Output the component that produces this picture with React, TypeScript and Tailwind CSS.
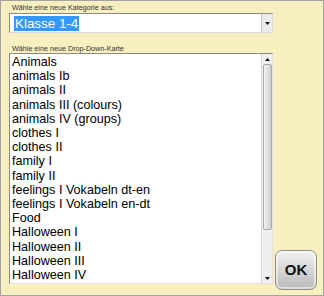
const items = [
  "Animals",
  "animals Ib",
  "animals II",
  "animals III (colours)",
  "animals IV (groups)",
  "clothes I",
  "clothes II",
  "family I",
  "family II",
  "feelings I Vokabeln dt-en",
  "feelings I Vokabeln en-dt",
  "Food",
  "Halloween I",
  "Halloween II",
  "Halloween III",
  "Halloween IV",
];

const font = { fontFamily: '"Liberation Sans", Arial, sans-serif' };

const DownArrow = () => (
  <svg width="5" height="3" viewBox="0 0 5 3">
    <polygon points="0,0 5,0 2.5,3" fill="#111" />
  </svg>
);

const UpArrow = () => (
  <svg width="5" height="3" viewBox="0 0 5 3">
    <polygon points="0,3 5,3 2.5,0" fill="#111" />
  </svg>
);

export default function App() {
  return (
    <div
      style={font}
      className="w-[324px] h-[296px] border border-[#a3a3a3] bg-[#f7efc0] pl-2 pt-[1px] flex flex-col"
    >
      {/* CATEGORY */}
      <div className="text-[7.2px] leading-[11px] text-[#333] ml-[3px] h-[11px]">
        Wähle eine neue Kategorie aus:
      </div>
      <div className="w-[264px] h-[20px] flex bg-white border border-t-[#8a8a8a] border-l-[#8a8a8a] border-r-[#dcdcdc] border-b-[#dcdcdc]">
        <div className="flex-1 flex items-center pl-[4px]">
          <span className="bg-[#3399ff] text-white text-[13.4px] leading-[15px] px-[1px]">Klasse 1-4</span>
        </div>
        <div className="w-[11px] flex items-center justify-center bg-[#ececec] border-l border-[#c8c8c8]">
          <DownArrow />
        </div>
      </div>

      {/* CARD LIST */}
      <div className="text-[7.2px] leading-[9px] text-[#333] ml-[3px] mt-[11px] h-[9px]">
        Wähle eine neue Drop-Down-Karte
      </div>
      <div className="flex items-end">
        <div className="w-[264px] h-[231px] flex bg-white border border-t-[#8a8a8a] border-l-[#8a8a8a] border-r-[#e2e2e2] border-b-[#e2e2e2]">
          <div className="flex-1 pl-[2px] pt-[1px] overflow-hidden">
            {items.map((item) => (
              <div key={item} className="text-[12.6px] leading-[14.2px] text-black whitespace-nowrap">
                {item}
              </div>
            ))}
          </div>
          {/* SCROLLBAR */}
          <div className="w-[11px] flex flex-col bg-[#efefef] border-l border-[#d8d8d8]">
            <div className="h-[10px] flex items-center justify-center">
              <UpArrow />
            </div>
            <div className="h-[166px] mx-[0.5px] rounded-[2px] border border-[#a9a9a9] bg-gradient-to-r from-[#f4f4f4] to-[#cfcfcf]" />
            <div className="flex-1" />
            <div className="h-[10px] flex items-center justify-center">
              <DownArrow />
            </div>
          </div>
        </div>
        <button className="ml-[2px] mb-[-6px] w-[42px] h-[40px] rounded-[7px] border border-[#8c8c8c] bg-gradient-to-b from-[#f2f2f2] to-[#b9b9b9] shadow-[inset_0_0_0_2px_rgba(255,255,255,0.5)] flex items-center justify-center text-[15px] font-bold text-[#111]">
          OK
        </button>
      </div>
    </div>
  );
}
